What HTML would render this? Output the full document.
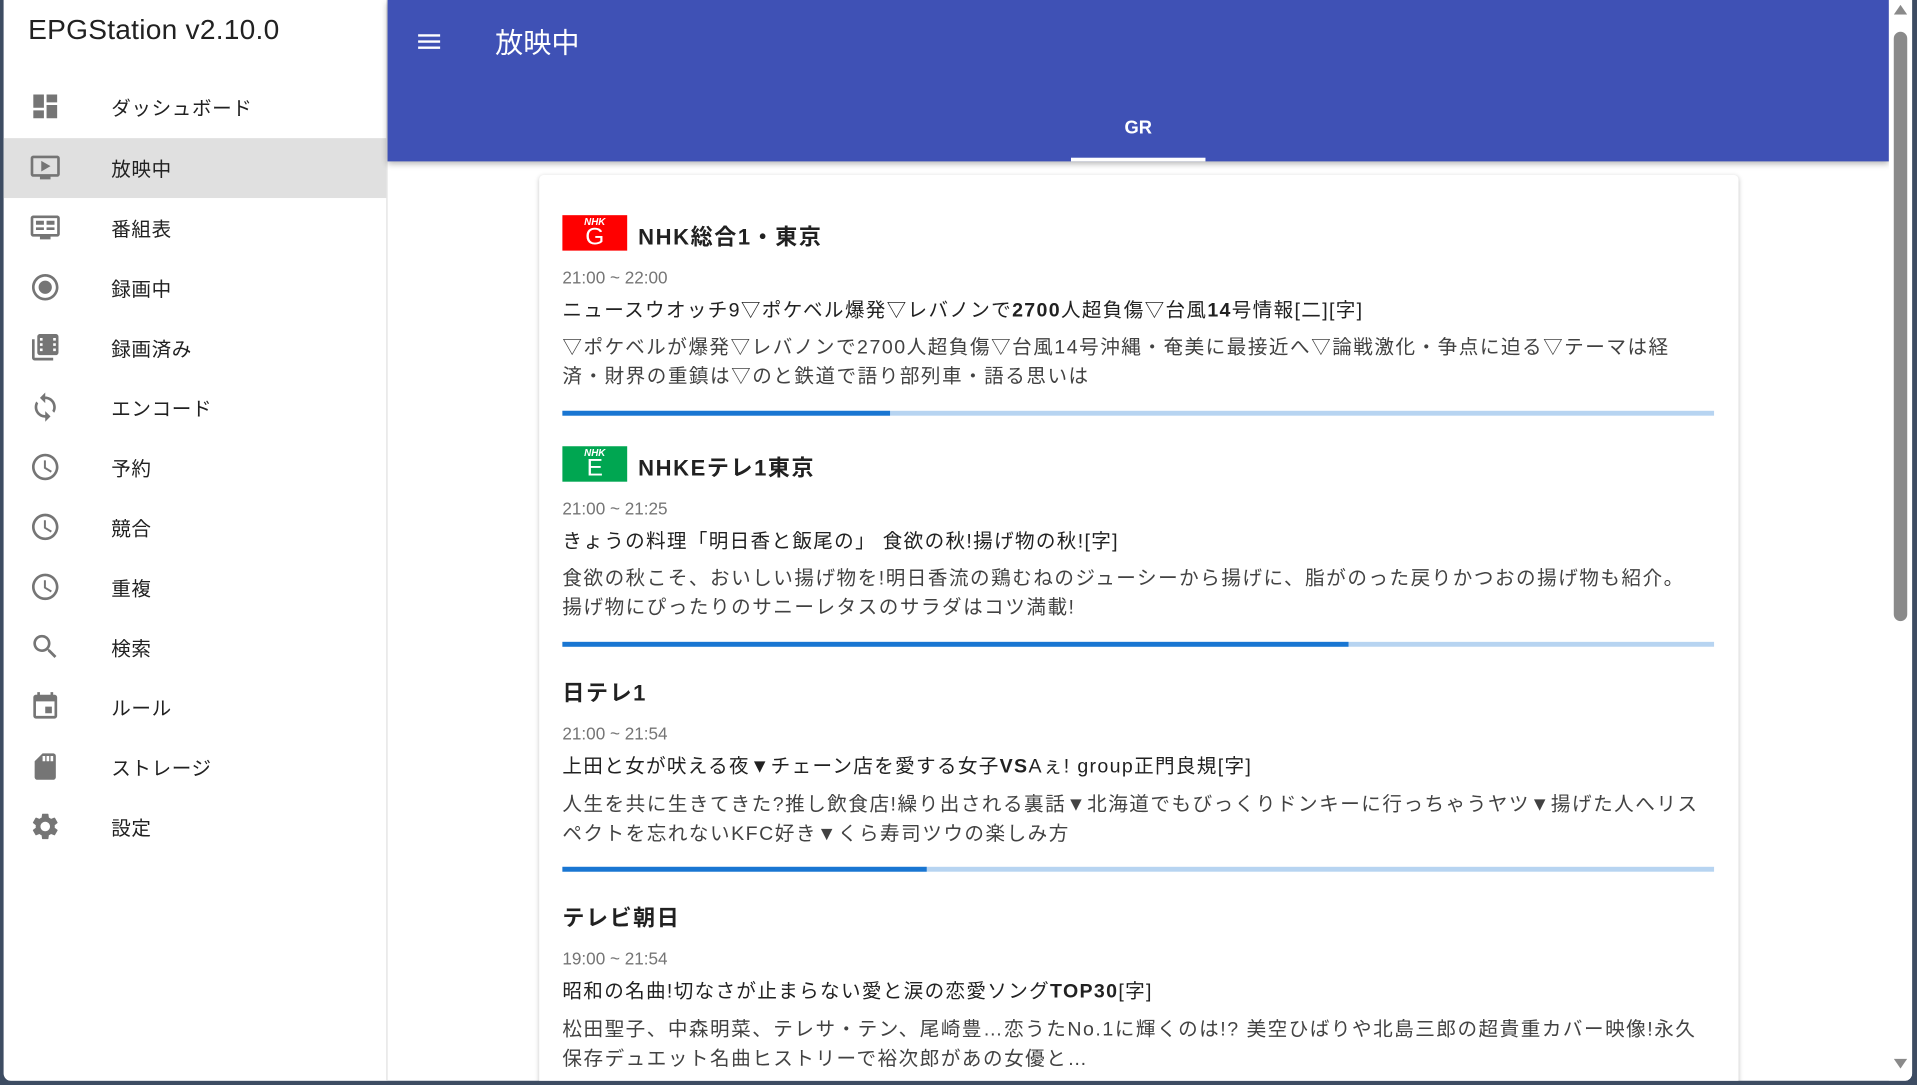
<!DOCTYPE html>
<html><head><meta charset="utf-8"><style>
html,body{margin:0;padding:0;width:1917px;height:1085px;overflow:hidden;background:#3d4c62}
#w{position:absolute;left:0;top:0;width:1568px;height:887.5px;transform:scale(1.22258);transform-origin:0 0;font-family:"Liberation Sans","Noto Sans CJK JP",sans-serif}
#app{position:absolute;left:3px;top:0;width:1561px;height:884px;background:#fff;border-radius:0 0 6px 6px;overflow:hidden}
#side{position:absolute;left:0;top:0;width:313px;height:884px;background:#fff;border-right:1px solid #e0e0e0}
#side h1{position:absolute;left:20px;top:11px;margin:0;font-size:23px;font-weight:normal;color:#212121;letter-spacing:.2px}
.it{position:absolute;left:0;width:313px;height:49px}
.it svg{position:absolute;left:21px;top:11px;width:26px;height:26px;fill:#757575}
.it span{position:absolute;left:88px;top:12px;font-size:16px;color:#212121;letter-spacing:.5px}
.act{background:#e0e0e0}
#hdr{position:absolute;left:314px;top:0;width:1228px;height:132px;background:#3f51b5;box-shadow:0 2px 5px rgba(0,0,0,.3)}
#hdr .t{position:absolute;left:88px;top:16px;font-size:23px;color:#fff}
#hdr .gr{position:absolute;left:559px;top:96px;width:110px;text-align:center;color:#fff;font-size:15px;font-weight:bold}
#hdr .ul{position:absolute;left:559px;top:129px;width:110px;height:3px;background:#fff}
#sb{position:absolute;left:1542px;top:0;width:19px;height:884px;background:#fff}
#card{position:absolute;left:438px;top:143px;width:981px;height:760px;background:#fff;border-radius:4px;box-shadow:0 1px 4px rgba(0,0,0,.22)}
.pg{position:absolute;left:19px;width:942px}
.logo{position:absolute;left:0;top:0;width:53px;height:29px;color:#fff;text-align:center}
.logo b{position:absolute;left:0;right:0;top:1px;font-size:8px;font-style:italic}
.logo i{position:absolute;left:0;right:0;top:7px;font-size:20px;font-style:normal;line-height:22px}
.nm{position:absolute;top:4px;font-size:18px;font-weight:bold;color:#212121;letter-spacing:1.3px}
.tm{position:absolute;left:0;font-size:14px;color:#757575}
.ti{position:absolute;left:0;font-size:16px;color:#212121;white-space:nowrap;letter-spacing:1.1px}
.de{position:absolute;left:0;width:980px;font-size:16px;line-height:24px;color:#424242;white-space:nowrap;letter-spacing:1.25px}
.bar{position:absolute;left:0;width:942px;height:4px;background:#b7d4f1}
.bar div{height:4px;background:#1976d2}
</style></head><body><div id="w"><div id="app">
<div id="side"><h1>EPGStation v2.10.0</h1>
<div class="it" style="top:63px"><svg viewBox="0 0 24 24"><path d="M3 13h8V3H3v10zm0 8h8v-6H3v6zm10 0h8V11h-8v10zm0-18v6h8V3h-8z"/></svg><span>ダッシュボード</span></div>
<div class="it act" style="top:113px"><svg viewBox="0 0 24 24"><path d="M21 3H3c-1.1 0-2 .9-2 2v12c0 1.1.9 2 2 2h5v2h8v-2h5c1.1 0 2-.9 2-2V5c0-1.1-.9-2-2-2zm0 14H3V5h18v12zm-5-6l-7 4V7z"/></svg><span>放映中</span></div>
<div class="it" style="top:162px"><svg viewBox="0 0 24 24"><path d="M21 3H3c-1.1 0-2 .9-2 2v12c0 1.1.9 2 2 2h5v2h8v-2h5c1.1 0 2-.9 2-2V5c0-1.1-.9-2-2-2zm0 14H3V5h18v12zM5 7h6v3H5zm0 5h6v2H5zm8-5h6v3h-6zm0 5h6v2h-6z"/></svg><span>番組表</span></div>
<div class="it" style="top:211px"><svg viewBox="0 0 24 24"><path d="M12 7c-2.76 0-5 2.24-5 5s2.24 5 5 5 5-2.24 5-5-2.24-5-5-5zm0-5C6.48 2 2 6.48 2 12s4.48 10 10 10 10-4.48 10-10S17.52 2 12 2zm0 18c-4.42 0-8-3.58-8-8s3.58-8 8-8 8 3.58 8 8-3.58 8-8 8z"/></svg><span>録画中</span></div>
<div class="it" style="top:260px"><svg viewBox="0 0 24 24"><path d="M4 6H2v14c0 1.1.9 2 2 2h14v-2H4V6zm16-4H8c-1.1 0-2 .9-2 2v12c0 1.1.9 2 2 2h12c1.1 0 2-.9 2-2V4c0-1.1-.9-2-2-2zM10 15H8v-2h2v2zm0-4H8V9h2v2zm0-4H8V5h2v2zm10 8h-2v-2h2v2zm0-4h-2V9h2v2zm0-4h-2V5h2v2z"/></svg><span>録画済み</span></div>
<div class="it" style="top:309px"><svg viewBox="0 0 24 24"><path d="M12 4V1L8 5l4 4V6c3.31 0 6 2.69 6 6 0 1.01-.25 1.97-.7 2.8l1.46 1.46C19.54 15.03 20 13.57 20 12c0-4.42-3.58-8-8-8zm0 14c-3.31 0-6-2.69-6-6 0-1.01.25-1.97.7-2.8L5.24 7.74C4.46 8.97 4 10.43 4 12c0 4.42 3.58 8 8 8v3l4-4-4-4v3z"/></svg><span>エンコード</span></div>
<div class="it" style="top:358px"><svg viewBox="0 0 24 24"><path d="M12 2C6.5 2 2 6.5 2 12s4.5 10 10 10 10-4.5 10-10S17.5 2 12 2zm0 18c-4.41 0-8-3.59-8-8s3.59-8 8-8 8 3.59 8 8-3.59 8-8 8zm.5-13H11v6l5.2 3.2.8-1.3-4.5-2.7V7z"/></svg><span>予約</span></div>
<div class="it" style="top:407px"><svg viewBox="0 0 24 24"><path d="M12 2C6.5 2 2 6.5 2 12s4.5 10 10 10 10-4.5 10-10S17.5 2 12 2zm0 18c-4.41 0-8-3.59-8-8s3.59-8 8-8 8 3.59 8 8-3.59 8-8 8zm.5-13H11v6l5.2 3.2.8-1.3-4.5-2.7V7z"/></svg><span>競合</span></div>
<div class="it" style="top:456px"><svg viewBox="0 0 24 24"><path d="M12 2C6.5 2 2 6.5 2 12s4.5 10 10 10 10-4.5 10-10S17.5 2 12 2zm0 18c-4.41 0-8-3.59-8-8s3.59-8 8-8 8 3.59 8 8-3.59 8-8 8zm.5-13H11v6l5.2 3.2.8-1.3-4.5-2.7V7z"/></svg><span>重複</span></div>
<div class="it" style="top:505px"><svg viewBox="0 0 24 24"><path d="M15.5 14h-.79l-.28-.27C15.41 12.59 16 11.11 16 9.5 16 5.91 13.09 3 9.5 3S3 5.91 3 9.5 5.91 16 9.5 16c1.61 0 3.09-.59 4.23-1.57l.27.28v.79l5 4.99L20.49 19l-4.99-5zm-6 0C7.01 14 5 11.99 5 9.5S7.01 5 9.5 5 14 7.01 14 9.5 11.99 14 9.5 14z"/></svg><span>検索</span></div>
<div class="it" style="top:554px"><svg viewBox="0 0 24 24"><path d="M17 12h-5v5h5v-5zM16 1v2H8V1H6v2H5c-1.11 0-1.99.9-1.99 2L3 19c0 1.1.89 2 2 2h14c1.1 0 2-.9 2-2V5c0-1.1-.9-2-2-2h-1V1h-2zm3 18H5V8h14v11z"/></svg><span>ルール</span></div>
<div class="it" style="top:603px"><svg viewBox="0 0 24 24"><path d="M18 2h-8L4.02 8 4 20c0 1.1.9 2 2 2h12c1.1 0 2-.9 2-2V4c0-1.1-.9-2-2-2zm-6 6h-2V4h2v4zm3 0h-2V4h2v4zm3 0h-2V4h2v4z"/></svg><span>ストレージ</span></div>
<div class="it" style="top:652px"><svg viewBox="0 0 24 24"><path d="M19.14 12.94c.04-.3.06-.61.06-.94 0-.32-.02-.64-.07-.94l2.03-1.58c.18-.14.23-.41.12-.61l-1.92-3.32c-.12-.22-.37-.29-.59-.22l-2.39.96c-.5-.38-1.03-.7-1.62-.94l-.36-2.54c-.04-.24-.24-.41-.48-.41h-3.84c-.24 0-.43.17-.47.41l-.36 2.54c-.59.24-1.13.57-1.62.94l-2.39-.96c-.22-.08-.47 0-.59.22L2.74 8.87c-.12.21-.08.47.12.61l2.03 1.58c-.05.3-.09.63-.09.94s.02.64.07.94l-2.03 1.58c-.18.14-.23.41-.12.61l1.92 3.32c.12.22.37.29.59.22l2.39-.96c.5.38 1.03.7 1.62.94l.36 2.54c.05.24.24.41.48.41h3.84c.24 0 .44-.17.47-.41l.36-2.54c.59-.24 1.13-.56 1.62-.94l2.39.96c.22.08.47 0 .59-.22l1.92-3.32c.12-.22.07-.47-.12-.61l-2.01-1.58zM12 15.6c-1.98 0-3.6-1.62-3.6-3.6s1.62-3.6 3.6-3.6 3.6 1.62 3.6 3.6-1.62 3.6-3.6 3.6z"/></svg><span>設定</span></div>
</div>
<div id="hdr">
<svg style="position:absolute;left:22px;top:22px;width:24px;height:24px;fill:#fff" viewBox="0 0 24 24"><path d="M3 18h18v-2H3v2zm0-5h18v-2H3v2zm0-7v2h18V6H3z"/></svg>
<div class="t">放映中</div><div class="gr">GR</div><div class="ul"></div></div>
<div id="card">
<div class="pg" style="top:33px"><div class="logo" style="background:#f00"><b>NHK</b><i>G</i></div><div class="nm" style="left:62px">NHK総合1・東京</div>
<div class="tm" style="top:43px">21:00 ~ 22:00</div><div class="ti" style="top:64px">ニュースウオッチ9▽ポケベル爆発▽レバノンで<b>2700</b>人超負傷▽台風<b>14</b>号情報[二][字]</div>
<div class="de" style="top:97px">▽ポケベルが爆発▽レバノンで2700人超負傷▽台風14号沖縄・奄美に最接近へ▽論戦激化・争点に迫る▽テーマは経<br>済・財界の重鎮は▽のと鉄道で語り部列車・語る思いは</div>
<div class="bar" style="top:160px"><div style="width:268px"></div></div></div>
<div class="pg" style="top:222px"><div class="logo" style="background:#00a651"><b>NHK</b><i>E</i></div><div class="nm" style="left:62px">NHKEテレ1東京</div>
<div class="tm" style="top:43px">21:00 ~ 21:25</div><div class="ti" style="top:64px">きょうの料理「明日香と飯尾の」 食欲の秋!揚げ物の秋![字]</div>
<div class="de" style="top:97px">食欲の秋こそ、おいしい揚げ物を!明日香流の鶏むねのジューシーから揚げに、脂がのった戻りかつおの揚げ物も紹介。<br>揚げ物にぴったりのサニーレタスのサラダはコツ満載!</div>
<div class="bar" style="top:160px"><div style="width:643px"></div></div></div>
<div class="pg" style="top:410px"><div class="nm" style="left:0;top:0">日テレ1</div>
<div class="tm" style="top:39px">21:00 ~ 21:54</div><div class="ti" style="top:60px">上田と女が吠える夜▼チェーン店を愛する女子<b>VS</b>Aぇ! group正門良規[字]</div>
<div class="de" style="top:94px">人生を共に生きてきた?推し飲食店!繰り出される裏話▼北海道でもびっくりドンキーに行っちゃうヤツ▼揚げた人へリス<br>ペクトを忘れないKFC好き▼くら寿司ツウの楽しみ方</div>
<div class="bar" style="top:156px"><div style="width:298px"></div></div></div>
<div class="pg" style="top:594px"><div class="nm" style="left:0;top:0">テレビ朝日</div>
<div class="tm" style="top:39px">19:00 ~ 21:54</div><div class="ti" style="top:60px">昭和の名曲!切なさが止まらない愛と涙の恋愛ソング<b>TOP30</b>[字]</div>
<div class="de" style="top:94px">松田聖子、中森明菜、テレサ・テン、尾崎豊…恋うたNo.1に輝くのは!? 美空ひばりや北島三郎の超貴重カバー映像!永久<br>保存デュエット名曲ヒストリーで裕次郎があの女優と…</div></div>
</div>
<div id="sb"><svg style="position:absolute;left:4px;top:4px;width:11px;height:8px" viewBox="0 0 11 8"><path d="M5.5 0L11 8H0z" fill="#8a8a8a"/></svg>
<div style="position:absolute;left:4px;top:26px;width:11px;height:482px;background:#8a8a8a;border-radius:6px"></div>
<svg style="position:absolute;left:4px;top:866px;width:11px;height:8px" viewBox="0 0 11 8"><path d="M0 0h11L5.5 8z" fill="#8a8a8a"/></svg></div>
</div></div></body></html>
